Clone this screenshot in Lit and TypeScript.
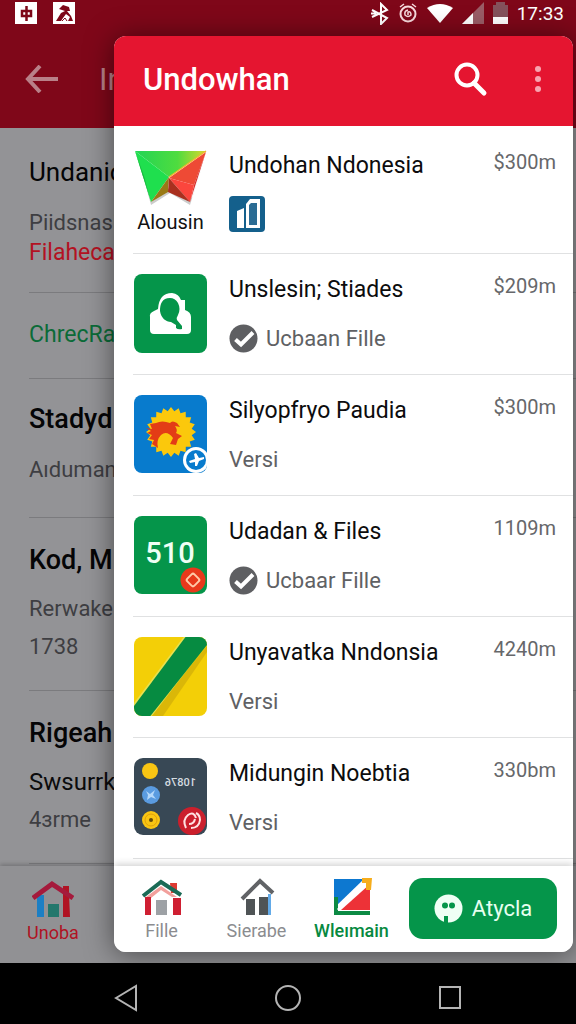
import { LitElement, html, css, nothing } from "lit";
import { customElement } from "lit/decorators.js";

const STAR = Array.from({ length: 40 }, (_, i) => {
  const r = i % 2 ? 21 : 25;
  const a = (i * Math.PI) / 20;
  return `${(37 + r * Math.cos(a)).toFixed(1)},${(37 + r * Math.sin(a)).toFixed(1)}`;
}).join(" ");

const gemIcon = html`<svg width="73" height="58" viewBox="0 0 73 58" aria-hidden="true">
  <defs>
    <linearGradient id="top" x1="0" y1="0" x2="1" y2="0">
      <stop offset="0" stop-color="#22d455" /><stop offset=".6" stop-color="#4fdc3f" /><stop offset="1" stop-color="#d8d62e" />
    </linearGradient>
  </defs>
  <path d="M3 4L17 55L36 43L56 55L72 4L58 48L38 36L17 52Z" fill="#000" opacity=".2" />
  <path d="M1 1H72L35 27Z" fill="url(#top)" />
  <path d="M1 1L35 27L17 52Z" fill="#1fdf4e" />
  <path d="M1 1L10 26L17 52Z" fill="#18b53f" />
  <path d="M35 27L17 52L34 42Z" fill="#9a7a16" />
  <path d="M72 2L35 28L60 35Z" fill="#ee4a35" />
  <path d="M72 2L60 35L56 52Z" fill="#d8302c" />
  <path d="M35 28L60 35L56 52Z" fill="#fb463d" />
  <path d="M35 28L56 52L34 42Z" fill="#a9301f" />
  <path d="M72 1L35 27" stroke="#f0b52c" stroke-width="1.5" />
</svg>`;

const searchTile = html`<svg width="73" height="79" viewBox="0 0 73 79" aria-hidden="true">
  <rect width="73" height="79" rx="8" fill="#05954a" />
  <path d="M16 43Q15 39 20 37L24 35Q25 19 38 19Q45 20 47 26L51 26V36Q57 38 57 43V56Q57 60 53 60H20Q16 60 16 56Z" fill="#fff" />
  <path d="M36 24C28 24 26 30 26 37C27 44 32 48 37 48L42 51V54Q44 56 48 55L48 52L43 46Q42 44 44 41Q47 35 44 29Q41 24 36 24Z" fill="#05954a" />
</svg>`;

const sunTile = html`<svg width="73" height="79" viewBox="0 0 73 79" aria-hidden="true">
  <defs><clipPath id="sun"><rect width="73" height="78" rx="8" /></clipPath></defs>
  <g clip-path="url(#sun)">
    <rect width="73" height="78" fill="#087bcd" />
    <polygon points=${STAR} fill="#fbc80c" />
    <path d="M12 33L18 34L16 29L22 28Q28 25 36 28Q38 25 43 28L46 32L41 31Q44 35 42 38L48 41L44 44L42 50L36 49L39 43Q33 35 27 40Q22 45 24 53L18 49L20 45L15 44L18 40L13 38L17 36Z" fill="#e33c16" />
    <circle cx="62" cy="65" r="13" fill="#fff" />
    <circle cx="62" cy="65" r="10" fill="#087bcd" />
    <path d="M55 66L61 64L60 59L62 58L65 63L70 62L70 64L65 66L63 71L61 71L61 67L56 68Z" fill="#fff" />
  </g>
</svg>`;

const numberTile = html`<svg width="73" height="79" viewBox="0 0 73 79" aria-hidden="true">
  <rect width="73" height="78" rx="8" fill="#05954a" />
  <text x="36" y="47" text-anchor="middle" font-size="29" font-weight="500" font-family="Roboto, sans-serif" fill="#effff5">510</text>
  <circle cx="59" cy="64" r="12.5" fill="#e8381b" />
  <rect x="54" y="59" width="10" height="10" rx="2" transform="rotate(45 59 64)" fill="none" stroke="#ffc9a8" stroke-width="2" />
</svg>`;

const stripeTile = html`<svg width="73" height="79" viewBox="0 0 73 79" aria-hidden="true">
  <defs><clipPath id="tile"><rect width="73" height="79" rx="8" /></clipPath></defs>
  <g clip-path="url(#tile)">
    <rect width="73" height="79" fill="#f3cf07" />
    <path d="M16 79L73 9V15L29 79Z" fill="#c9a60a" opacity=".6" />
    <path d="M-3 70L51 -2H80L14 84H-3Z" fill="#e8e04e" />
    <path d="M-3 73L53 -2H80L73 8L14 82L-3 84Z" fill="#068b41" />
  </g>
</svg>`;

const boardTile = html`<svg width="73" height="79" viewBox="0 0 73 79" aria-hidden="true">
  <rect width="73" height="77" rx="9" fill="#384855" />
  <circle cx="16" cy="13" r="8" fill="#f9c513" />
  <circle cx="17" cy="37" r="9" fill="#5a9be0" />
  <path d="M12 33L16 36L21 32L19 37L22 41L17 39L13 42L14 37Z" fill="#b5d8fa" />
  <circle cx="17" cy="62" r="9" fill="#f9c513" />
  <circle cx="17" cy="62" r="6" fill="none" stroke="#dfa00c" stroke-width="1" />
  <circle cx="17" cy="62" r="2" fill="#63490a" />
  <text x="-62" y="28" transform="scale(-1 1)" font-size="11" font-weight="500" font-family="Roboto, sans-serif" fill="#d5dce0">10876</text>
  <circle cx="58" cy="63" r="14" fill="#cb1f2c" />
  <path d="M52 70Q48 62 54 57Q60 53 62 60M57 70Q65 70 66 62Q66 57 62 55M55 66Q60 66 61 61" fill="none" stroke="#ffe2e2" stroke-width="2" />
</svg>`;

const cityBadge = html`<svg width="36" height="36" viewBox="0 0 36 36" aria-hidden="true">
  <rect width="36" height="36" rx="4" fill="#14608c" />
  <path d="M8 15L15 12V32H8Z" fill="#fff" />
  <path d="M17 8L21 3H31V32H17Z" fill="#fff" />
  <path d="M20 9L22 7H28V29H20Z" fill="#2b6c94" />
</svg>`;

const check = html`<svg width="29" height="29" viewBox="0 0 29 29" aria-hidden="true">
  <circle cx="14.5" cy="14.5" r="14" fill="#5e5f62" />
  <path d="M6.5 15.5L12 20.5L24 8.5" fill="none" stroke="#fff" stroke-width="4" />
</svg>`;

const houseRed = html`<svg width="42" height="38" viewBox="0 0 42 38" aria-hidden="true">
  <path d="M5 15H12V37H5Z" fill="#1c7fc4" />
  <path d="M16 24H27V37H16Z" fill="#23776c" />
  <path d="M31 6H37V14L38 37H31Z" fill="#b01323" />
  <path d="M1 18L20 4L41 18" fill="none" stroke="#a51a3c" stroke-width="5" />
</svg>`;
const houseFille = html`<svg width="42" height="38" viewBox="0 0 42 38" aria-hidden="true">
  <path d="M29 5H36V15H30Z" fill="#dd3a32" />
  <path d="M5 19L20 8L36 19L31 19L20 12L10 20Z" fill="#f2a09c" />
  <path d="M4 19H10V37H4ZM32 20H40V37H32Z" fill="#cf1f32" />
  <path d="M15 22H26V37H15Z" fill="#9da1a5" />
  <path d="M2 18L20 4L40 17" fill="none" stroke="#1b6b56" stroke-width="4" />
</svg>`;
const houseGray = html`<svg width="42" height="38" viewBox="0 0 42 38" aria-hidden="true">
  <path d="M10 21H19V37H10ZM23 19H32V37H23Z" fill="#4f5456" />
  <path d="M32 16H35V37H32Z" fill="#62aae8" />
  <path d="M6 21L24 3L37 15" fill="none" stroke="#616366" stroke-width="4" />
</svg>`;
const chartIcon = html`<svg width="42" height="38" viewBox="0 0 42 38" aria-hidden="true">
  <path d="M3 1H33L3 30Z" fill="#0d78d0" />
  <path d="M3 19H7V33H39V37H3Z" fill="#0c8a44" />
  <path d="M39 6V32H10Z" fill="#ed3237" />
  <path d="M7 32L36 4" stroke="#fff" stroke-width="3" />
  <path d="M31 0L41 0L40 12L35 12L35 5L31 5Z" fill="#f6ad1c" />
</svg>`;

interface AppItem {
  name: string;
  price: string;
  icon: unknown;
  label?: string;
  sub?: string;
  checked?: boolean;
}

const ITEMS: AppItem[] = [
  { name: "Undohan Ndonesia", price: "$300m", icon: gemIcon, label: "Alousin" },
  { name: "Unslesin; Stiades", price: "$209m", icon: searchTile, sub: "Ucbaan Fille", checked: true },
  { name: "Silyopfryo Paudia", price: "$300m", icon: sunTile, sub: "Versi" },
  { name: "Udadan & Files", price: "1109m", icon: numberTile, sub: "Ucbaar Fille", checked: true },
  { name: "Unyavatka Nndonsia", price: "4240m", icon: stripeTile, sub: "Versi" },
  { name: "Midungin Noebtia", price: "330bm", icon: boardTile, sub: "Versi" },
];

@customElement("status-bar")
class StatusBar extends LitElement {
  static styles = css`
    :host { display: flex; align-items: center; gap: 9px; height: 26px; padding: 0 12px 0 15px; color: #fff; font-size: 19px; }
    .notes { display: flex; gap: 15px; flex: 1; }
    svg { display: block; }
  `;
  render() {
    return html`
      <div class="notes">
        <svg width="23" height="22" viewBox="0 0 23 22"><rect width="22" height="22" fill="#fff" /><path d="M7 9H16V14H7ZM11.500 4V19" fill="none" stroke="#7d0718" stroke-width="2.5" /></svg>
        <svg width="23" height="22" viewBox="0 0 23 22"><rect width="22" height="22" fill="#fff" /><path d="M6 7L10 3L16 5L17 9H14L18 14L20 19H15L17 15L13 12L10 16L8 19H3L8 11L12 9Z" fill="#7d0718" /><path d="M9 19L12 16L14 19" stroke="#7d0718" fill="none" /></svg>
      </div>
      <svg width="18" height="23" viewBox="0 0 18 23"><path d="M1 8L16 16L10 22V2L16 8L1 15M5 11.5H0" fill="none" stroke="#fff" stroke-width="2" /></svg>
      <svg width="20" height="22" viewBox="0 0 20 22"><circle cx="10" cy="12" r="7.5" fill="none" stroke="#f7d9dc" stroke-width="2" /><path d="M2 5L6 2M18 5L14 2M10 8Q6 9 7 13Q10 16 13 13Q13 9 10 10V13" fill="none" stroke="#f7d9dc" stroke-width="1.5" /></svg>
      <svg width="26" height="20" viewBox="0 0 26 20"><path d="M0 5Q13 -3 26 5L13 20Z" fill="#fff" /></svg>
      <svg width="22" height="22" viewBox="0 0 22 22"><path d="M22 0V22H0Z" fill="#9a5c66" /><path d="M11 11V22H0Z" fill="#fff" /></svg>
      <svg width="15" height="22" viewBox="0 0 15 22"><path d="M3 0H12V3H15V22H0V3H3Z" fill="#84525c" /><path d="M0 15H15V22H0Z" fill="#fff" /></svg>
      <span>17:33</span>
    `;
  }
}

@customElement("back-page")
class BackPage extends LitElement {
  static styles = css`
    :host { display: flex; flex-direction: column; background: #939396; color: #08080a; }
    .head { background: #7f0719; }
    .bar { display: flex; align-items: center; gap: 40px; height: 102px; padding: 4px 25px 0; box-sizing: border-box; color: #b98088; }
    .bar h1 { margin: 0; font-size: 31px; font-weight: 400; }
    button { border: 0; padding: 0; background: none; color: inherit; display: block; font: inherit; }
    svg { display: block; }
    .rows { flex: 1; padding-left: 29px; white-space: nowrap; }
    .row { border-bottom: 1px solid #7b7b7e; padding: 24px 0; font-size: 22px; line-height: 30px; color: #3e3e42; }
    .row h2 { margin: 0 0 16px; font-size: 26px; line-height: 40px; font-weight: 400; color: #050506; }
    .row p { margin: 0; }
    .row .dark { color: #0b0b0c; font-size: 24px; }
    .row .red { color: #b31222; font-size: 23px; }
    .row .green { color: #0b6b38; font-size: 23px; }
    .row .strong { font-weight: 500; font-size: 27px; }
    .short { padding: 27px 0 28px; }
    .mid { padding: 20px 0 32px; }
    .tall { padding: 22px 0 24px; }
    .tall p { line-height: 38px; }
    .tall h2 { margin-bottom: 10px; }
    .tabs { height: 97px; box-sizing: border-box; padding: 14px 26px; background: #919194; box-shadow: 0 -2px 4px rgba(0, 0, 0, 0.2); }
    .tab { display: flex; flex-direction: column; align-items: center; width: 54px; gap: 4px; font-size: 18px; line-height: 22px; color: #b01323; }
  `;
  render() {
    return html`
      <header class="head">
        <status-bar></status-bar>
        <div class="bar">
          <button aria-label="Back"><svg width="34" height="28" viewBox="0 0 34 28"><path d="M33 14H3M15 1L3 14L15 27" fill="none" stroke="currentColor" stroke-width="4" /></svg></button>
          <h1>In</h1>
        </div>
      </header>
      <div class="rows">
        <div class="row"><h2>Undanic</h2><p>Piidsnasi</p><p class="red">Filaheca</p></div>
        <div class="row short"><p class="green">ChrecRa</p></div>
        <div class="row mid"><h2 class="strong">Stadyd</h2><p>Aıduman</p></div>
        <div class="row tall"><h2 class="strong">Kod, M</h2><p>Rerwake</p><p>1738</p></div>
        <div class="row tall"><h2 class="strong">Rigeah</h2><p class="dark">Swsurrk</p><p>4зrme</p></div>
      </div>
      <nav class="tabs"><button class="tab">${houseRed}<span>Unoba</span></button></nav>
    `;
  }
}

@customElement("app-row")
class AppRow extends LitElement {
  static properties = { item: { attribute: false } };
  declare item: AppItem;
  static styles = css`
    :host { display: block; }
    .row { display: flex; align-items: flex-start; gap: 22px; min-height: 121px; box-sizing: border-box; padding: 20px 17px 18px 1px; border-bottom: 1px solid #e0e1e2; }
    .row.first { min-height: 127px; padding-top: 24px; padding-bottom: 17px; }
    .pic { width: 73px; flex: none; text-align: center; font-size: 20px; line-height: 28px; color: #111; }
    .body { flex: 1; min-width: 0; }
    h2 { margin: 0 0 14px; font-size: 23px; line-height: 32px; font-weight: 400; color: #0c0c0d; white-space: nowrap; }
    .sub { display: flex; align-items: center; gap: 8px; height: 36px; font-size: 22px; color: #606164; }
    .price { font-size: 20px; line-height: 24px; color: #66676a; }
    svg { display: block; }
  `;
  render() {
    const i = this.item;
    return html`<article class="row ${i.label ? "first" : ""}">
      <div class="pic">${i.icon}${i.label ?? nothing}</div>
      <div class="body">
        <h2>${i.name}</h2>
        <div class="sub">${i.sub ? nothing : cityBadge}${i.checked ? check : nothing}${i.sub ?? nothing}</div>
      </div>
      <span class="price">${i.price}</span>
    </article>`;
  }
}

@customElement("app-root")
class AppRoot extends LitElement {
  static styles = css`
    :host { display: flex; flex-direction: column; min-height: 100vh; background: #000; font-family: Roboto, "Liberation Sans", sans-serif; }
    .stage { flex: 1; display: grid; grid-template-columns: minmax(0, 1fr); overflow: hidden; }
    .stage > * { grid-area: 1 / 1; }
    .dialog { display: flex; flex-direction: column; margin: 36px 3px 11px 114px; border-radius: 12px; overflow: hidden; background: #fff; box-shadow: 0 2px 28px rgba(0, 0, 0, 0.5); z-index: 1; }
    .head { display: flex; align-items: center; height: 90px; box-sizing: border-box; padding: 0 23px 4px 29px; background: #e51530; color: #fff; }
    .head h1 { flex: 1; margin: 0; font-size: 31px; font-weight: 500; }
    button { border: 0; padding: 0; background: none; font: inherit; color: inherit; }
    svg { display: block; }
    .head div { display: flex; align-items: center; gap: 38px; }
    .list { flex: 1; padding: 0 0 7px 19px; }
    .foot { display: flex; align-items: flex-start; height: 86px; box-sizing: border-box; padding: 12px 16px 0 0; background: #fff; box-shadow: 0 -2px 7px rgba(0, 0, 0, 0.18); }
    .tab { display: flex; flex: 1; flex-direction: column; align-items: center; gap: 4px; font-size: 18px; line-height: 22px; color: #8b8c8f; }
    .tab.on { color: #07893f; font-weight: 500; }
    .cta { display: flex; align-items: center; justify-content: center; gap: 9px; width: 148px; height: 61px; margin-left: 10px; border-radius: 14px; background: #05954a; color: #e6fff0; font-size: 22px; }
    .keys { display: flex; justify-content: space-between; align-items: center; height: 62px; padding: 8px 114px 0; box-sizing: border-box; }
  `;
  render() {
    return html`
      <main class="stage">
        <back-page></back-page>
        <section class="dialog">
          <header class="head">
            <h1>Undowhan</h1>
            <div>
              <button aria-label="Search"><svg width="36" height="36" viewBox="0 0 36 36"><circle cx="15" cy="14" r="10.5" fill="none" stroke="#fff" stroke-width="4" /><path d="M22 22L32 32" stroke="#fff" stroke-width="5" stroke-linecap="round" /></svg></button>
              <button aria-label="More"><svg width="24" height="28" viewBox="0 0 24 28" fill="#f7a5b0"><circle cx="12" cy="4" r="3" /><circle cx="12" cy="14" r="3" /><circle cx="12" cy="24" r="3" /></svg></button>
            </div>
          </header>
          <div class="list">${ITEMS.map((item) => html`<app-row .item=${item}></app-row>`)}</div>
          <footer class="foot">
            <button class="tab">${houseFille}<span>Fille</span></button>
            <button class="tab">${houseGray}<span>Sierabe</span></button>
            <button class="tab on">${chartIcon}<span>Wleımain</span></button>
            <button class="cta"><svg width="29" height="29" viewBox="0 0 29 29"><circle cx="14.5" cy="14.5" r="14" fill="#effff5" /><circle cx="11" cy="11.5" r="3" fill="#05954a" /><circle cx="18" cy="11.5" r="3" fill="#05954a" /><path d="M10 22H14V29H10Z" fill="#05954a" /></svg>Atycla</button>
          </footer>
        </section>
      </main>
      <nav class="keys">
        <button aria-label="Back"><svg width="24" height="28" viewBox="0 0 24 28"><path d="M2 14L22 2V26Z" fill="none" stroke="#b4b4b4" stroke-width="2" /></svg></button>
        <button aria-label="Home"><svg width="28" height="28" viewBox="0 0 28 28"><circle cx="14" cy="14" r="12" fill="none" stroke="#b4b4b4" stroke-width="2" /></svg></button>
        <button aria-label="Recent"><svg width="24" height="28" viewBox="0 0 24 28"><rect x="2" y="3" width="20" height="21" fill="none" stroke="#b4b4b4" stroke-width="2" /></svg></button>
      </nav>
    `;
  }
}
